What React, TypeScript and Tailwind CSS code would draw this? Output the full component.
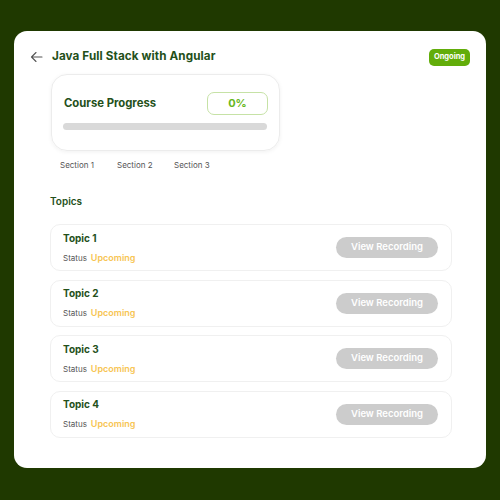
import React from "react";

const topics = ["Topic 1", "Topic 2", "Topic 3", "Topic 4"];

export default function App() {
  return (
    <div
      className="w-[500px] h-[500px] bg-[#1f3900] pt-[31px] px-[14px]"
      style={{ fontFamily: "Inter, 'Open Sans', sans-serif" }}
    >
      <div className="w-[472px] h-[437px] bg-white rounded-[13px] pt-[16px] relative">
        {/* Header */}
        <div className="flex items-center h-[20px] pl-[16px] pr-[16px]">
          <svg width="13" height="12" viewBox="0 0 13 12" fill="none" className="mr-[9px]">
            <path d="M12 6H1.5M1.5 6L6 1.5M1.5 6L6 10.5" stroke="#555" strokeWidth="1.1" strokeLinecap="round" strokeLinejoin="round" />
          </svg>
          <span className="text-[11.7px] font-bold text-[#24501a] tracking-[0.1px]">Java Full Stack with Angular</span>
          <div className="ml-auto flex items-center">
            <span className="flex items-center justify-center h-[17px] w-[41px] rounded-[5px] bg-[#62ad0a] text-white text-[7.5px] font-bold leading-none">Ongoing</span>
          </div>
        </div>

        {/* Progress card */}
        <div className="ml-[37px] mt-[7px] w-[229px] h-[77px] rounded-[16px] border border-[#ececec] shadow-[0_1px_4px_rgba(0,0,0,0.06)] px-[11px] pt-[17px]">
          <div className="flex items-center justify-between">
            <span className="text-[11.3px] font-bold text-[#24501a] ml-[1px]">Course Progress</span>
            <div className="w-[61px] h-[23px] rounded-[7px] border border-[#c6e2a6] flex items-center justify-center text-[11px] font-bold text-[#68b722]">0%</div>
          </div>
          <div className="mt-[8px] h-[7px] w-[204px] rounded-full bg-[#d9d9d9]" />
        </div>

        {/* Sections */}
        <div className="flex ml-[46px] mt-[8px] gap-[19px] text-[8px] text-[#555]">
          <span className="w-[38px]">Section 1</span>
          <span className="w-[38px]">Section 2</span>
          <span className="w-[38px]">Section 3</span>
        </div>

        {/* Topics */}
        <div className="ml-[36px] mt-[23px] text-[10px] font-semibold text-[#24501a]">Topics</div>

        <div className="ml-[36px] mr-[34px] mt-[15px] flex flex-col gap-[8.5px]">
          {topics.map((t) => (
            <div
              key={t}
              className="h-[47px] rounded-[10px] border border-[#f0f0f0] flex items-center pl-[12px] pr-[13px]"
            >
              <div className="flex flex-col">
                <span className="text-[10px] font-bold text-[#24501a] leading-[12px]">{t}</span>
                <div className="flex items-center mt-[8px] leading-[12px]">
                  <span className="text-[8px] text-[#555]">Status</span>
                  <span className="text-[9px] font-semibold text-[#f7c553] ml-[4px]">Upcoming</span>
                </div>
              </div>
              <div className="ml-auto">
                <div className="w-[102px] h-[21px] rounded-full bg-[#cccccc] text-white text-[9.5px] font-semibold flex items-center justify-center">View Recording</div>
              </div>
            </div>
          ))}
        </div>
      </div>
    </div>
  );
}
